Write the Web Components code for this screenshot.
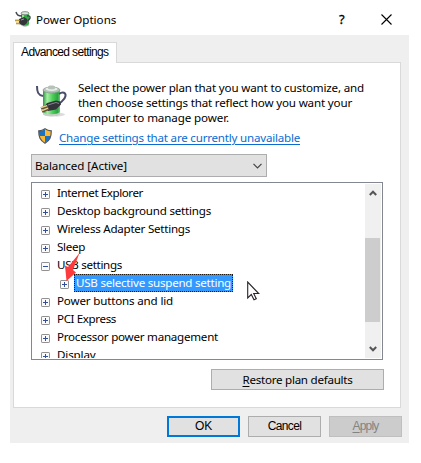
<!DOCTYPE html>
<html lang="en">
<head>
<meta charset="utf-8">
<title>Power Options</title>
<style>
    body {
        margin: 0;
        background: #fff;
        color: #000;
        font-family: "Noto Sans", "Open Sans", sans-serif;
        font-size: 11.6px;
    }
</style>
</head>
<body>
<power-dialog></power-dialog>
<script>
(function () {
    function define(name, html, Base) {
        const template = document.createElement("template");
        template.innerHTML = html;
        customElements.define(name, class extends (Base || HTMLElement) {
            constructor() {
                super();
                this.attachShadow({ mode: "open" }).appendChild(template.content.cloneNode(true));
            }
        });
    }

    // one line of text, tracked so that it fills the width given in "w"
    class FitBase extends HTMLElement {
        connectedCallback() {
            const span = this.shadowRoot.querySelector("span");
            const natural = span.getBoundingClientRect().width;
            const count = this.textContent.length;
            const w = Number(this.getAttribute("w"));
            if (w && count) {
                span.style.letterSpacing = (w - natural) / count + "px";
            }
        }
    }
    define("fit-text", `
        <style>
            :host { display: block; white-space: nowrap; }
        </style>
        <span><slot></slot></span>
    `, FitBase);

    define("battery-icon", `
        <style>
            :host { display: block; }
            svg { display: block; width: 100%; height: 100%; }
        </style>
        <svg viewBox="0 0 32 32">
            <defs>
                <linearGradient id="cell">
                    <stop offset="0" stop-color="#2f9440"/>
                    <stop offset=".25" stop-color="#a4efa4"/>
                    <stop offset=".55" stop-color="#4fd05c"/>
                    <stop offset=".85" stop-color="#2ba640"/>
                    <stop offset="1" stop-color="#6cc474"/>
                </linearGradient>
            </defs>
            <ellipse cx="18" cy="29.5" rx="11" ry="2" fill="#dcdcdc"/>
            <path d="M7 5v23c0 4 17 4 17 0V5z" fill="url(#cell)"/>
            <path d="M7 27c3 3 14 3 17 0v2c-2 3-15 3-17 0z" fill="#c4cfc5"/>
            <ellipse cx="15.500" cy="5" rx="8.500" ry="3" fill="#b4c2b7" stroke="#84958b" stroke-width=".7"/>
            <ellipse cx="15.500" cy="4" rx="6" ry="1.900" fill="#e8efe9"/>
            <path d="M12 1.500c0-1.500 7-1.500 7 0v2c-1 1.200-6 1.200-7 0z" fill="#b7c3ba"/>
            <path d="M1 1c0 6 1 9 6 10M23 9c4-3 7-1 6.500 2-.6 4-4 5-6.500 8" fill="none" stroke="#4a4e6b" stroke-width="2"/>
            <path d="M11 18l9-2.500 4 1 1 3-5 5-8 1.500-4-4z" fill="#33343b"/>
            <path d="M12 20l8-2.500 3 1" fill="none" stroke="#85868e" stroke-width="1"/>
            <path d="M12 21l-7 2.500M13 23.500l-7 3" stroke="#655238" stroke-width="2.600"/>
            <path d="M11 20.700l-6 2M12 23.200l-6 2.500" stroke="#ecd393" stroke-width="1.300"/>
        </svg>
    `);

    // small title bar version: the plug covers most of the cell
    define("battery-small", `
        <style>
            :host { display: block; width: 16px; height: 16px; }
            svg { display: block; }
        </style>
        <svg width="16" height="16" viewBox="0 0 16 16">
            <path d="M6 2v11c0 3 8 3 8 0V2z" fill="#2fae42"/>
            <path d="M8 4v8" stroke="#91e493" stroke-width="2"/>
            <path d="M6 13c2 2 6 2 8 0v1c-2 2-6 2-8 0z" fill="#aab6ac"/>
            <ellipse cx="10" cy="2.200" rx="4" ry="1.600" fill="#dce5dd" stroke="#76817a" stroke-width=".8"/>
            <path d="M1 1c1 3 2 4 6 4M12 5c4-1 4 3 0 5" fill="none" stroke="#44474f" stroke-width="1.500"/>
            <path d="M4 8l5-2 3 2v4l-3 2.500-5-1.500z" fill="#34353a"/>
            <path d="M6 9l3-1" stroke="#999"/>
            <path d="M0 9.500h5M1 12.500h4" stroke="#a8852b" stroke-width="1.500"/>
            <path d="M0 9h4M1 12h3" stroke="#e2c35c" stroke-width=".8"/>
        </svg>
    `);

    define("shield-icon", `
        <style>
            :host { display: block; width: 16px; height: 16px; }
            svg { display: block; }
        </style>
        <svg width="16" height="16" viewBox="0 0 16 16">
            <defs>
                <clipPath id="s"><path d="M8 1c2 1.500 4 2 6 2 0 6-1 9-6 12C3 12 2 9 2 3c2 0 4-.5 6-2z"/></clipPath>
            </defs>
            <g clip-path="url(#s)">
                <path d="M0 0h8v8H0zM8 8h8v8H8z" fill="#1a72c4"/>
                <path d="M8 0h8v8H8zM0 8h8v8H0z" fill="#fcb932"/>
            </g>
            <path d="M8 .8c2 1.500 4 2 6.300 2 0 6.200-1.300 9.400-6.300 12.400C3 12.200 1.700 9 1.700 2.800 4 2.800 6 2.300 8 .8z" fill="none" stroke="#52565c" stroke-width="1.200"/>
        </svg>
    `);

    define("title-bar", `
        <style>
            :host { display: flex; align-items: center; height: 27px; padding: 0 13px 0 5px; background: #fff; }
            battery-small { margin: -5px 5px 0 0; }
            fit-text { flex: 1; margin-top: -4px; line-height: 18px; }
            .help { width: 8px; margin: -5px 34px 0 0; font-size: 13px; line-height: 16px; -webkit-text-stroke: .3px #000; }
            svg { display: block; margin: -5px 4px 0 0; }
        </style>
        <battery-small></battery-small>
        <fit-text w="78.5"><slot></slot></fit-text>
        <span class="help">?</span>
        <svg width="11" height="11" viewBox="0 0 11 11"><path d="M.5.500l10 10M10.500.500l-10 10" stroke="#000" stroke-width="1.100"/></svg>
    `);

    define("push-button", `
        <style>
            :host {
                display: flex;
                box-sizing: border-box;
                width: 73px;
                height: 21px;
                align-items: center;
                justify-content: center;
                border: 1px solid #adadad;
                background: #e1e1e1;
                line-height: 17px;
            }
            :host([kind="default"]) { border: 2px solid #0078d7; }
            :host([disabled]) { border-color: #bfbfbf; background: #ccc; color: #838383; }
        </style>
        <slot></slot>
    `);

    define("combo-box", `
        <style>
            :host {
                display: flex;
                box-sizing: border-box;
                width: 236px;
                height: 23px;
                align-items: center;
                justify-content: space-between;
                padding: 0 4px 0 3px;
                border: 1px solid #adadad;
                background: #e1e1e1;
            }
        </style>
        <slot></slot>
        <svg width="9" height="6" viewBox="0 0 9 6"><path d="M.5.800l4 4 4-4" fill="none" stroke="#444" stroke-width="1.200"/></svg>
    `);

    define("tree-row", `
        <style>
            :host { display: flex; height: 18px; flex: none; padding-left: 8px; line-height: 17px; }
            :host([level="2"]) { padding-left: 27px; }
            svg { flex: none; margin: 6px 6px 0 0; }
            :host([level="2"]) svg { margin-right: 5px; }
            .v { display: block; }
            :host([open]) .v { display: none; }
            .label { box-sizing: border-box; height: 18px; padding: 0 1px; }
            :host([selected]) .label {
                width: 159px;
                border: 1px dotted #20150a;
                background: #3399ff;
                color: #fff;
                line-height: 15px;
            }
        </style>
        <svg width="9" height="9" viewBox="0 0 9 9">
            <rect x=".5" y=".5" width="8" height="8" rx=".6" fill="#fafafa" stroke="#919191"/>
            <path d="M2 4.500h5" stroke="#344e9a"/>
            <path class="v" d="M4.500 2v5" stroke="#344e9a"/>
        </svg>
        <div class="label"><slot></slot></div>
    `);

    define("scroll-bar", `
        <style>
            :host { display: flex; flex-direction: column; width: 16px; background: #f0f0f0; align-items: center; }
            svg { display: block; flex: none; margin: 6px 0; }
            .track { flex: 1; width: 100%; padding-top: 36px; }
            .thumb { width: 15px; height: 84px; background: #cdcdcd; }
        </style>
        <svg width="8" height="6" viewBox="0 0 8 6"><path d="M.8 5L4 1.700 7.200 5" fill="none" stroke="#555" stroke-width="2"/></svg>
        <div class="track"><div class="thumb"></div></div>
        <svg width="8" height="6" viewBox="0 0 8 6"><path d="M.8 1L4 4.300 7.200 1" fill="none" stroke="#555" stroke-width="2"/></svg>
    `);

    define("tree-view", `
        <style>
            :host {
                display: flex;
                position: relative;
                box-sizing: border-box;
                width: 352px;
                height: 178px;
                padding: 1px;
                border: 1px solid #828790;
                background: #fff;
            }
            .rows { display: flex; flex: 1; flex-direction: column; overflow: hidden; }
            .arrow { position: absolute; left: 32px; top: 69px; }
            .cursor { position: absolute; left: 215px; top: 98px; }
        </style>
        <div class="rows"><slot></slot></div>
        <scroll-bar></scroll-bar>
        <svg class="arrow" width="20" height="31" viewBox="0 0 20 31"><path d="M15.500 1L4 15l-3-1.500L2.500 29 12 20.500 9 18z" fill="#fb3b3c"/></svg>
        <svg class="cursor" width="13" height="20" viewBox="0 0 13 20"><path d="M.7 1v16l3.600-3.500 2.700 5.300 2.300-1.100-2.600-5.200h5z" fill="#fff" stroke="#29232b" stroke-width="1.100"/></svg>
    `);

    define("tab-panel", `
        <style>
            :host { display: block; }
            .tab {
                position: relative;
                box-sizing: border-box;
                width: 104px;
                height: 21px;
                margin-bottom: -1px;
                padding: 0 0 0 7px;
                border: 1px solid #d9d9d9;
                border-bottom: 0;
                background: #fff;
                font: 12px/19px "Liberation Sans", Arial, sans-serif;
            }
            .page {
                box-sizing: border-box;
                width: 388px;
                height: 346px;
                padding: 17px;
                border: 1px solid #d9d9d9;
                background: #fff;
            }
        </style>
        <div class="tab"><slot name="tab"></slot></div>
        <div class="page"><slot></slot></div>
    `);

    define("power-dialog", `
        <style>
            :host { display: block; box-sizing: border-box; width: 399px; margin-left: 10px; padding-top: 8px; }
            .body { box-sizing: border-box; height: 408px; padding: 7px 7px 0 3px; background: #efefef; }
            .intro { display: flex; height: 48px; }
            .intro battery-icon { width: 32px; height: 34px; margin: 4px 10px 0 5px; }
            .lines { display: flex; flex-direction: column; line-height: 15px; }
            .link { display: flex; height: 26px; }
            .link shield-icon { margin: 0 6px 0 6px; }
            .link fit-text { height: 18px; line-height: 19px; color: #0a6cd2; text-decoration: underline; text-underline-offset: 2px; }
            combo-box { margin-bottom: 5px; }
            .restore { width: 173px; margin: 9px 0 0 180px; }
            .buttons { display: flex; justify-content: flex-end; gap: 8px; margin-top: 8px; font: 12px "Liberation Sans", Arial, sans-serif; }
            u { text-underline-offset: 2px; }
        </style>
        <title-bar>Power Options</title-bar>
        <div class="body">
            <tab-panel>
                <fit-text slot="tab" w="87.5">Advanced settings</fit-text>
                <div class="intro">
                    <battery-icon></battery-icon>
                    <div class="lines">
                        <fit-text w="286">Select the power plan that you want to customize, and</fit-text>
                        <fit-text w="274">then choose settings that reflect how you want your</fit-text>
                        <fit-text w="151">computer to manage power.</fit-text>
                    </div>
                </div>
                <div class="link">
                    <shield-icon></shield-icon>
                    <fit-text w="241">Change settings that are currently unavailable</fit-text>
                </div>
                <combo-box><fit-text w="92">Balanced [Active]</fit-text></combo-box>
                <tree-view>
                    <tree-row><fit-text w="86">Internet Explorer</fit-text></tree-row>
                    <tree-row><fit-text w="154">Desktop background settings</fit-text></tree-row>
                    <tree-row><fit-text w="133">Wireless Adapter Settings</fit-text></tree-row>
                    <tree-row><fit-text w="28">Sleep</fit-text></tree-row>
                    <tree-row open><fit-text w="65">USB settings</fit-text></tree-row>
                    <tree-row level="2" selected><fit-text w="155">USB selective suspend setting</fit-text></tree-row>
                    <tree-row><fit-text w="116">Power buttons and lid</fit-text></tree-row>
                    <tree-row><fit-text w="59">PCI Express</fit-text></tree-row>
                    <tree-row><fit-text w="161">Processor power management</fit-text></tree-row>
                    <tree-row><fit-text w="38.5">Display</fit-text></tree-row>
                </tree-view>
                <push-button class="restore"><fit-text w="110"><u>R</u>estore plan defaults</fit-text></push-button>
            </tab-panel>
            <div class="buttons">
                <push-button kind="default"><fit-text w="17">OK</fit-text></push-button>
                <push-button><fit-text w="33.5">Cancel</fit-text></push-button>
                <push-button disabled><fit-text w="26"><u>A</u>pply</fit-text></push-button>
            </div>
        </div>
    `);
})();
</script>
</body>
</html>
